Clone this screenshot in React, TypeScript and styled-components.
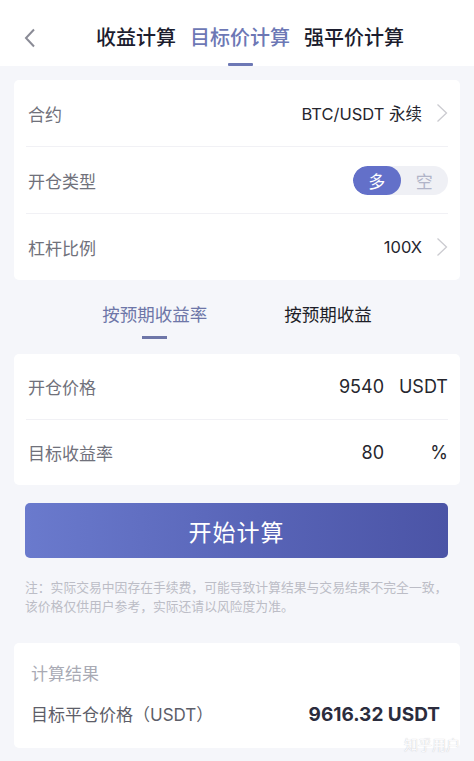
import styled, { createGlobalStyle } from "styled-components";

const GlobalStyle = createGlobalStyle`
  html, body {
    margin: 0;
    padding: 0;
    background: #f5f6fa;
  }
  body {
    font-family: Inter, "Noto Sans CJK SC", sans-serif;
    -webkit-font-smoothing: antialiased;
  }
`;

const Page = styled.div`
  position: relative;
  width: 474px;
  height: 761px;
  overflow: hidden;
  background: #f5f6fa;
`;

const Header = styled.div`
  display: flex;
  align-items: flex-start;
  height: 66px;
  padding: 24px 0 0 24px;
  box-sizing: border-box;
  background: #fff;
`;

const BackButton = styled.button`
  width: 14px;
  height: 28px;
  padding: 0;
  border: none;
  background: none;
  display: flex;
  align-items: center;
  color: #8a8b96;
  margin-right: 58px;
`;

const TopTabs = styled.div`
  display: flex;
  gap: 14px;
`;

const TopTab = styled.div<{ $active?: boolean }>`
  display: flex;
  flex-direction: column;
  align-items: center;
  gap: 11px;
  font-size: 20px;
  line-height: 28px;
  font-weight: 500;
  color: ${(p) => (p.$active ? "#6d78b5" : "#1c1d2e")};

  &::after {
    content: "";
    width: 25px;
    height: 3px;
    border-radius: 1px;
    background: ${(p) => (p.$active ? "#6d78b5" : "transparent")};
  }
`;

const Card = styled.div`
  margin: 0 14px;
  background: #fff;
  border-radius: 5px;
  padding: 0 12px;
`;

const FirstCard = styled(Card)`
  margin-top: 14px;
`;

const Row = styled.div<{ $height?: number }>`
  display: flex;
  align-items: center;
  justify-content: space-between;
  height: ${(p) => p.$height ?? 66}px;
  border-bottom: 1px solid #f1f1f5;

  &:last-child {
    border-bottom: none;
  }
`;

const Label = styled.span`
  font-size: 17px;
  color: #70717b;
  padding-left: 2px;
`;

const Value = styled.span`
  display: flex;
  align-items: center;
  gap: 14px;
  font-size: 16.5px;
  color: #26262e;
`;

const Chevron = styled.svg`
  width: 12px;
  height: 20px;
  color: #cbcbd0;
`;

const Toggle = styled.div`
  display: flex;
  width: 95px;
  height: 29px;
  border-radius: 15px;
  background: #eff0f5;
  overflow: hidden;
`;

const ToggleOption = styled.span<{ $active?: boolean }>`
  flex: 1;
  display: flex;
  align-items: center;
  justify-content: center;
  border-radius: 15px;
  font-size: 17px;
  background: ${(p) => (p.$active ? "#6370c9" : "transparent")};
  color: ${(p) => (p.$active ? "#fff" : "#b1b4c8")};
`;

const SubTabs = styled.div`
  display: flex;
  justify-content: center;
  gap: 77px;
  height: 74px;
  padding-top: 22px;
  box-sizing: border-box;
`;

const SubTab = styled.div<{ $active?: boolean }>`
  display: flex;
  flex-direction: column;
  align-items: center;
  gap: 8px;
  font-size: 17.5px;
  line-height: 26px;
  color: ${(p) => (p.$active ? "#6e76a8" : "#1e1e28")};

  &::after {
    content: "";
    width: 25px;
    height: 3px;
    background: ${(p) => (p.$active ? "#6e76a8" : "transparent")};
  }
`;

const InputValue = styled.span`
  display: flex;
  align-items: center;
  font-size: 18px;
  color: #26262e;
`;

const Unit = styled.span`
  width: 64px;
  text-align: right;
  font-size: 18px;
`;

const PrimaryButton = styled.button`
  display: block;
  width: 423px;
  height: 55px;
  margin: 18px 0 0 25px;
  border: none;
  border-radius: 5px;
  background: linear-gradient(90deg, #6a7acd 0%, #5864b7 55%, #4b54a6 100%);
  color: #fff;
  font-family: "Noto Sans CJK SC", sans-serif;
  font-size: 23px;
  letter-spacing: 1px;
`;

const Note = styled.p`
  margin: 20px 0 0;
  padding: 0 10px 0 25px;
  font-size: 12.8px;
  line-height: 19px;
  color: #bcbdc6;
  white-space: nowrap;
`;

const ResultCard = styled.div`
  margin: 27px 14px 0;
  height: 105px;
  box-sizing: border-box;
  padding: 19px 20px 0 17px;
  background: #fff;
  border-radius: 5px;
`;

const ResultTitle = styled.div`
  font-size: 17px;
  line-height: 24px;
  color: #a9aab4;
`;

const ResultRow = styled.div`
  display: flex;
  justify-content: space-between;
  align-items: center;
  margin-top: 16px;
  line-height: 26px;
`;

const ResultLabel = styled.span`
  font-size: 17px;
  color: #5d5e69;
`;

const ResultValue = styled.span`
  font-size: 19px;
  font-weight: 700;
  color: #2b2c3d;
`;

const Watermark = styled.div`
  position: absolute;
  right: 14px;
  bottom: 7px;
  font-size: 14px;
  color: #fafafc;
  text-shadow: 0 0 1px rgba(150, 150, 160, 0.6);
`;

const ArrowRight = () => (
  <Chevron viewBox="0 0 12 20" fill="none">
    <path d="M1.5 1.5 L10.5 10 L1.5 18.5" stroke="currentColor" strokeWidth="1.3" />
  </Chevron>
);

const App = () => {
  return (
    <Page>
      <GlobalStyle />
      <Header>
        <BackButton>
          <svg width="12" height="20" viewBox="0 0 12 20" fill="none">
            <path d="M10 1.5 L2 10 L10 18.5" stroke="currentColor" strokeWidth="2" />
          </svg>
        </BackButton>
        <TopTabs>
          <TopTab>收益计算</TopTab>
          <TopTab $active>目标价计算</TopTab>
          <TopTab>强平价计算</TopTab>
        </TopTabs>
      </Header>

      <FirstCard>
        <Row>
          <Label>合约</Label>
          <Value>
            BTC/USDT 永续
            <ArrowRight />
          </Value>
        </Row>
        <Row>
          <Label>开仓类型</Label>
          <Toggle>
            <ToggleOption $active>多</ToggleOption>
            <ToggleOption>空</ToggleOption>
          </Toggle>
        </Row>
        <Row>
          <Label>杠杆比例</Label>
          <Value>
            100X
            <ArrowRight />
          </Value>
        </Row>
      </FirstCard>

      <SubTabs>
        <SubTab $active>按预期收益率</SubTab>
        <SubTab>按预期收益</SubTab>
      </SubTabs>

      <Card>
        <Row $height={65}>
          <Label>开仓价格</Label>
          <InputValue>
            9540
            <Unit>USDT</Unit>
          </InputValue>
        </Row>
        <Row $height={65}>
          <Label>目标收益率</Label>
          <InputValue>
            80
            <Unit>%</Unit>
          </InputValue>
        </Row>
      </Card>

      <PrimaryButton>开始计算</PrimaryButton>

      <Note>
        注：实际交易中因存在手续费，可能导致计算结果与交易结果不完全一致，
        <br />
        该价格仅供用户参考，实际还请以风险度为准。
      </Note>

      <ResultCard>
        <ResultTitle>计算结果</ResultTitle>
        <ResultRow>
          <ResultLabel>目标平仓价格（USDT）</ResultLabel>
          <ResultValue>9616.32 USDT</ResultValue>
        </ResultRow>
      </ResultCard>

      <Watermark>知乎用户</Watermark>
    </Page>
  );
};

export default App;
